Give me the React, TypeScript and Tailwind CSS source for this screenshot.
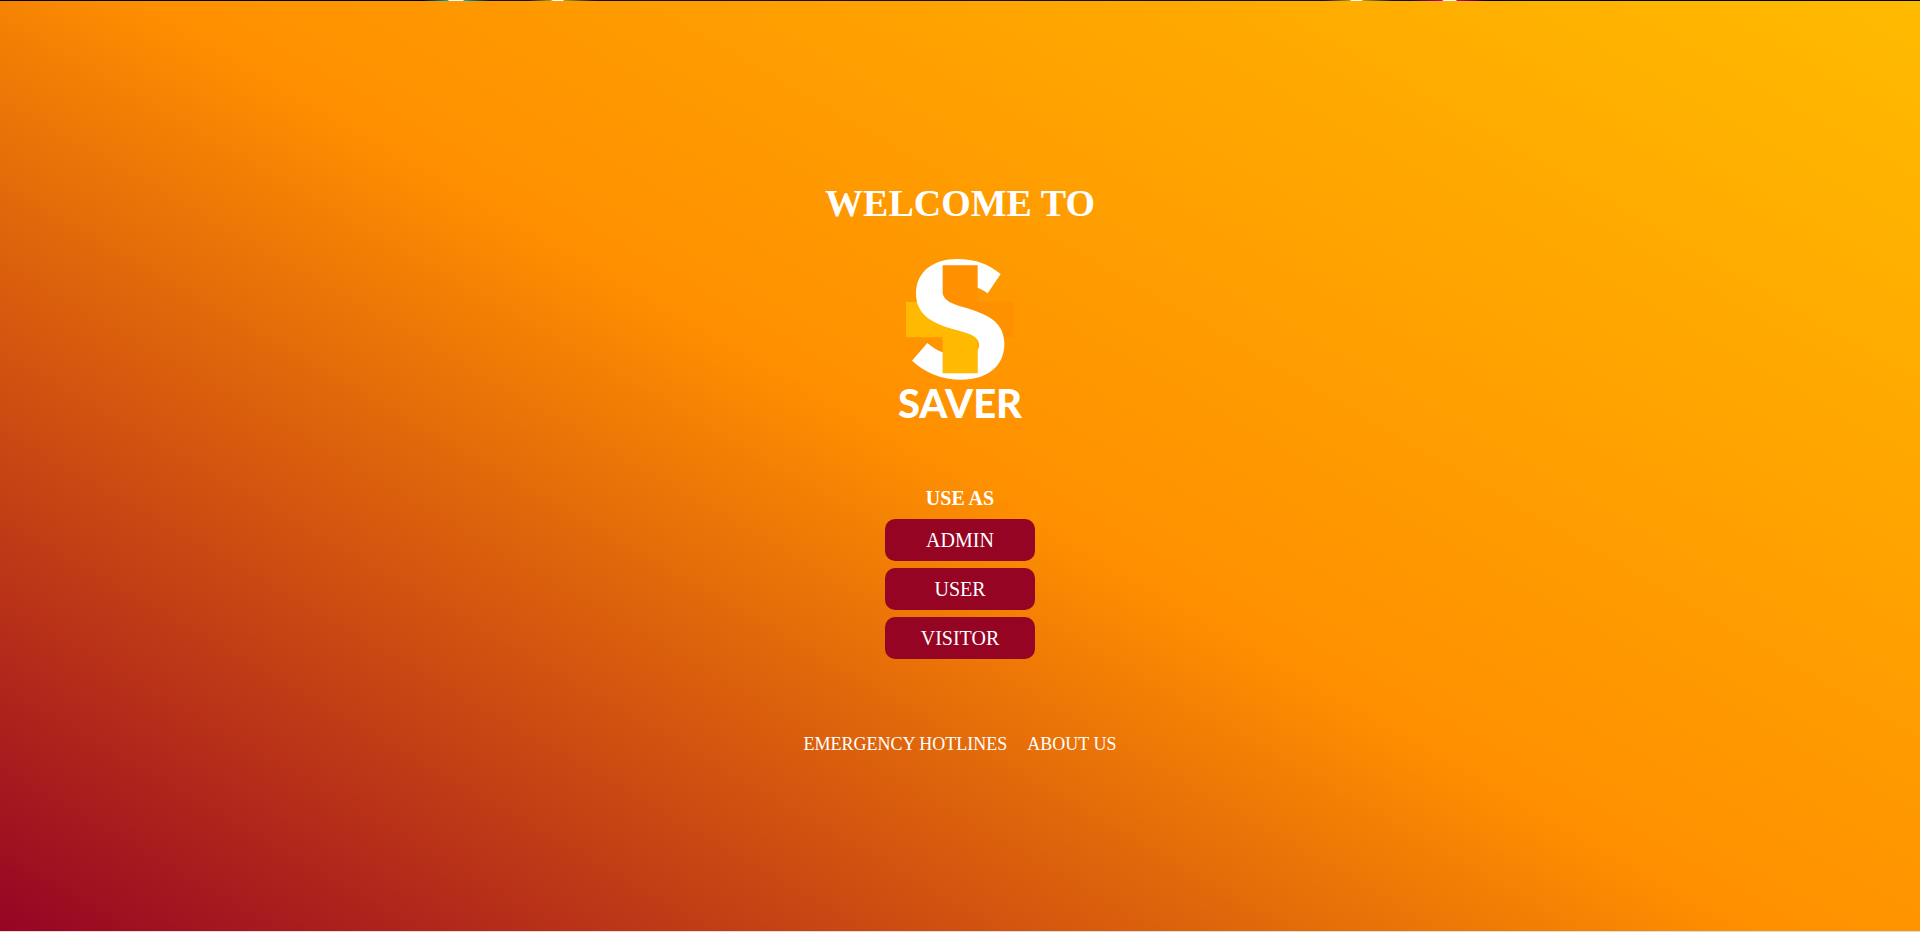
const roles = ["ADMIN", "USER", "VISITOR"];

function Logo() {
  return (
    <svg viewBox="0 0 480 570" className="mt-[17px] h-[190px] w-40" role="img" aria-label="Saver">
      <path fill="#ff9000" d="M188 76H293V186H402V292H293V230H188Z" />
      <path fill="#ffb900" d="M78 186H188V240H293V400H188V292H78Z" />
      <path
        fill="#fff"
        d="M362 102L323 160Q309 149 293 143V76H188V148C184 175 205 188 240 199C270 207 300 216 325 230C358 249 373 276 373 312C373 380 320 419 245 419C185 419 135 398 96 362L142 309Q165 329 188 337V400H293V330Q297 325 297 315C297 285 262 279 215 266C150 248 108 220 108 160C108 95 160 57 232 57C285 57 325 72 362 102Z"
      />
      <text
        x="240"
        y="533"
        textAnchor="middle"
        fill="#fff"
        className="font-['Lato','Inter',sans-serif] text-[120px] font-black"
      >
        SAVER
      </text>
    </svg>
  );
}

export default function App() {
  return (
    <div className="flex min-h-screen flex-col font-['Liberation_Serif',serif] text-white">
      <div className="h-px bg-[linear-gradient(90deg,#000_22%,#00a8c8_23.3%,#fff_23.4%,#fff_24.1%,#00a8c8_24.2%,#111_25.5%,#111_27.5%,#a8a020_28.7%,#fff_28.8%,#fff_29.3%,#a8a020_29.4%,#111_31%,#111_69%,#a8a020_70.3%,#fff_70.4%,#fff_70.9%,#a8a020_71%,#111_72.5%,#111_73.5%,#c000b0_75.1%,#fff_75.2%,#fff_75.8%,#c000b0_75.9%,#000_77.5%)]" />
      <main className="flex flex-1 flex-col items-center justify-center border-b border-[#ddd] bg-[linear-gradient(30deg,#960424,#ff9000_50%,#ffbb00)] bg-origin-border pt-1.5">
        <h1 className="text-[38px] leading-10 font-bold">WELCOME TO</h1>
        <Logo />
        <h2 className="mt-14 text-xl leading-6 font-bold">USE AS</h2>
        <div className="mt-[9px] flex flex-col gap-[7px]">
          {roles.map((role) => (
            <button
              key={role}
              type="button"
              className="h-[42px] w-[150px] rounded-[10px] bg-[#960424] text-xl"
            >
              {role}
            </button>
          ))}
        </div>
        <nav className="mt-[73px] flex gap-5 text-lg leading-6">
          <a href="#hotlines">EMERGENCY HOTLINES</a>
          <a href="#about">ABOUT US</a>
        </nav>
      </main>
    </div>
  );
}
